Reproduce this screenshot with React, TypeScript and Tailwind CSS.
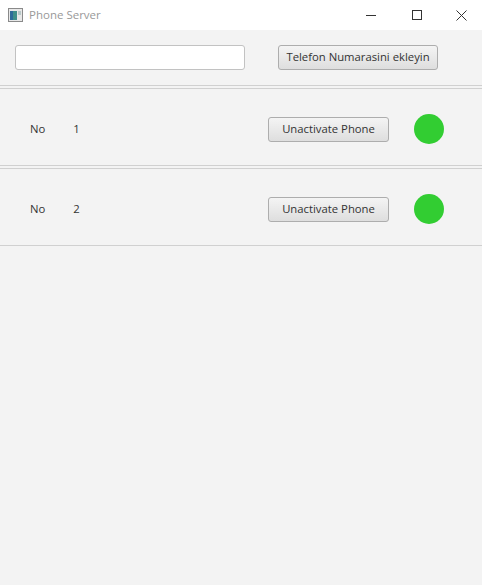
const phones = [{ no: 1 }, { no: 2 }]

const font = { fontFamily: '"Open Sans", "Noto Sans", Arial, sans-serif' }

const TitleBar = () => (
    <div className="h-[30px] bg-white flex items-center">
        <svg width="15" height="14" viewBox="0 0 15 14" className="ml-[8px]">
            <rect x="0.5" y="0.5" width="14" height="13" fill="#e8e8e8" stroke="#8a8a8a" />
            <rect x="2" y="3" width="7" height="9" fill="#3f8f8a" />
            <rect x="2" y="3" width="3" height="9" fill="#2e6b9a" />
            <rect x="10" y="3" width="3" height="4" fill="#b8c8c8" />
        </svg>
        <span className="ml-[6px] text-[11.5px] text-[#999999]">Phone Server</span>
        <div className="ml-auto flex items-center">
            <div className="w-[46px] h-[30px] flex items-center justify-center">
                <div className="w-[10px] h-px bg-[#333]" />
            </div>
            <div className="w-[46px] h-[30px] flex items-center justify-center">
                <div className="w-[10px] h-[10px] border border-[#333]" />
            </div>
            <div className="w-[42px] h-[30px] flex items-center justify-center">
                <svg width="11" height="11" viewBox="0 0 11 11">
                    <path d="M0.5 0.5 L10.5 10.5 M10.5 0.5 L0.5 10.5" stroke="#333" strokeWidth="1" />
                </svg>
            </div>
        </div>
    </div>
)

const FxButton = ({ children, className = '' }: { children: React.ReactNode; className?: string }) => (
    <button className={`h-[25px] rounded-[3px] border border-[#adadad] bg-gradient-to-b from-[#f4f4f4] to-[#dedede] text-[11.3px] text-[#333333] whitespace-nowrap ${className}`}>
        {children}
    </button>
)

export default function App() {
    return (
        <div style={font} className="w-[482px] h-[585px] bg-[#f3f3f3] flex flex-col">
            <TitleBar />
            <div className="h-[56px] flex items-center pl-[15px] border-b border-[#d0d0d0]">
                <input className="w-[230px] h-[25px] rounded-[3px] border border-[#c2c2c2] bg-white outline-none px-2 text-[12px]" />
                <FxButton className="ml-[33px] w-[160px]">Telefon Numarasini ekleyin</FxButton>
            </div>
            {phones.map((p) => (
                <div key={p.no} className="mt-[2px] h-[78px] pt-[4px] border-y border-[#d0d0d0] flex items-center">
                    <span className="ml-[30px] text-[11.3px] text-[#333333]">No</span>
                    <span className="ml-[28px] text-[11.3px] text-[#333333]">{p.no}</span>
                    <FxButton className="ml-auto w-[121px]">Unactivate Phone</FxButton>
                    <div className="ml-[25px] mr-[38px] w-[30px] h-[30px] rounded-full bg-[#32cd32]" />
                </div>
            ))}
        </div>
    )
}
